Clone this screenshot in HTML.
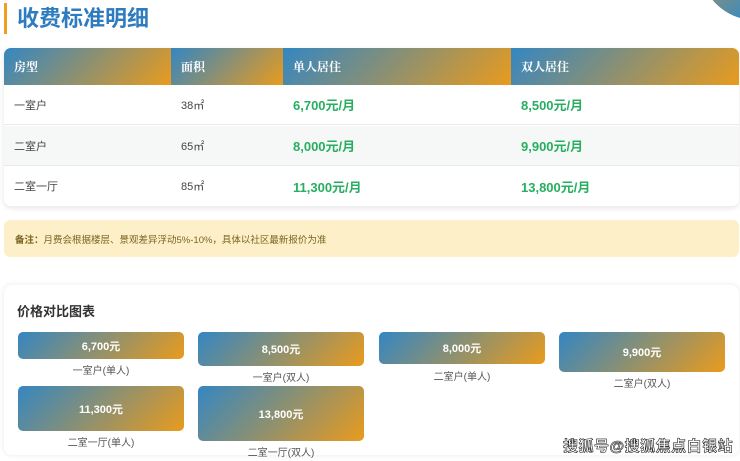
<!DOCTYPE html>
<html><head><meta charset="utf-8"><style>
*{margin:0;padding:0;box-sizing:border-box}
body{width:740px;height:461px;overflow:hidden;background:#fff;font-family:"Liberation Sans","Noto Sans CJK SC",sans-serif;position:relative}
.g{background:linear-gradient(135deg,#3486c2 0%,#e99b1d 100%)}
.circ{position:absolute;left:700px;top:-90px;width:110px;height:110px;border-radius:50%;background:linear-gradient(135deg,#e99b1d,#3a8ac0 70%)}
.bar{position:absolute;left:4px;top:3px;width:3px;height:31px;background:#f0a020}
h1{position:absolute;left:17px;top:5px;font-size:22px;color:#2e7cbf;font-weight:bold;line-height:28px}
.tbl{position:absolute;left:4px;top:48px;width:735px;height:158px;border-radius:7px;overflow:hidden;box-shadow:0 2px 6px rgba(0,0,0,.1)}
.row{position:absolute;left:0;width:735px;height:40px;font-size:11px;color:#444}
.row div,.hd div{position:absolute;top:0;height:100%;display:flex;align-items:center;padding-left:10px}
.hd{position:absolute;left:0;top:0;width:735px;height:37px;color:#fff;font-weight:bold;font-size:12px;font-family:"Noto Serif CJK SC",serif}
.c1{left:0;width:167px}.c2{left:167px;width:112px}.c3{left:279px;width:228px}.c4{left:507px;width:228px}
.gr{color:#27ae60;font-weight:bold;font-size:13px}
.note{position:absolute;left:4px;top:220px;width:735px;height:37px;background:#fdf0c9;border-radius:6px;font-size:9.5px;color:#7b6420;padding:12px 0 0 11px}
.card{position:absolute;left:4px;top:285px;width:735px;height:170px;background:#fff;border-radius:8px;box-shadow:0 0 6px rgba(0,0,0,.09)}
.card h2{position:absolute;left:13px;top:16px;font-size:13px;color:#333;font-weight:bold}
.b{position:absolute;border-radius:5px;color:#fff;font-weight:bold;font-size:11px;display:flex;align-items:center;justify-content:center}
.l{position:absolute;font-size:10px;color:#555;text-align:center;width:166px}
.wm{position:absolute;left:563px;top:435px;font-size:15px;font-weight:bold;color:#fff;-webkit-text-stroke:0.6px #222;letter-spacing:0.5px}
</style></head><body>
<div class="circ"></div>
<div class="bar"></div>
<h1>收费标准明细</h1>
<div class="tbl">
<div class="hd"><div class="c1 g">房型</div><div class="c2 g">面积</div><div class="c3 g">单人居住</div><div class="c4 g">双人居住</div></div>
<div class="row" style="top:37px;background:#fff;border-bottom:1px solid #e8ecec"><div class="c1">一室户</div><div class="c2">38㎡</div><div class="c3 gr">6,700元/月</div><div class="c4 gr">8,500元/月</div></div>
<div class="row" style="top:78px;background:#f6f8f7;border-bottom:1px solid #e8ecec"><div class="c1">二室户</div><div class="c2">65㎡</div><div class="c3 gr">8,000元/月</div><div class="c4 gr">9,900元/月</div></div>
<div class="row" style="top:118px;background:#fff"><div class="c1">二室一厅</div><div class="c2">85㎡</div><div class="c3 gr">11,300元/月</div><div class="c4 gr">13,800元/月</div></div>
</div>
<div class="note"><b>备注：</b>月费会根据楼层、景观差异浮动5%-10%，具体以社区最新报价为准</div>
<div class="card"><h2>价格对比图表</h2></div>
<div class="b g" style="left:18px;top:332px;width:166px;height:27px">6,700元</div>
<div class="l" style="left:18px;top:362px">一室户(单人)</div>
<div class="b g" style="left:198px;top:332px;width:166px;height:34px">8,500元</div>
<div class="l" style="left:198px;top:369px">一室户(双人)</div>
<div class="b g" style="left:379px;top:332px;width:166px;height:32px">8,000元</div>
<div class="l" style="left:379px;top:368px">二室户(单人)</div>
<div class="b g" style="left:559px;top:332px;width:166px;height:40px">9,900元</div>
<div class="l" style="left:559px;top:375px">二室户(双人)</div>
<div class="b g" style="left:18px;top:386px;width:166px;height:45px">11,300元</div>
<div class="l" style="left:18px;top:434px">二室一厅(单人)</div>
<div class="b g" style="left:198px;top:386px;width:166px;height:55px">13,800元</div>
<div class="l" style="left:198px;top:444px">二室一厅(双人)</div>
<div class="wm">搜狐号@搜狐焦点白银站</div>
</body></html>
